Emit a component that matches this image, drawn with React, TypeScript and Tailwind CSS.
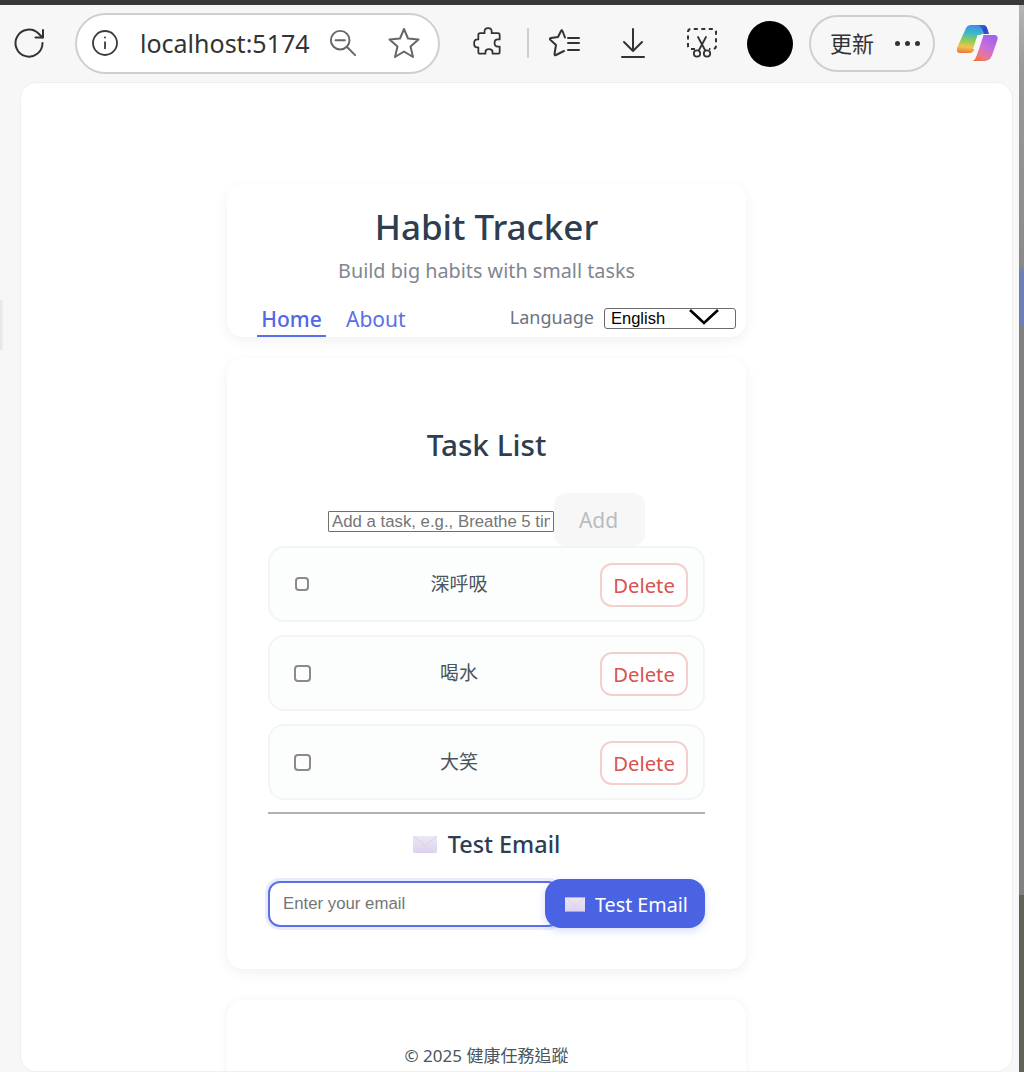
import React from "react";

const sans = "font-['Noto_Sans','Noto_Sans_CJK_TC',sans-serif]";

function Stroke({ size = 36, children, className = "" }: { size?: number; children: React.ReactNode; className?: string }) {
  return (
    <svg width={size} height={size} viewBox="0 0 36 36" fill="none" stroke="currentColor" strokeWidth="2" strokeLinecap="round" strokeLinejoin="round" className={className}>
      {children}
    </svg>
  );
}

function Icon32({ children }: { children: React.ReactNode }) {
  return (
    <svg width="32" height="32" viewBox="0 0 32 32" fill="none" stroke="currentColor" strokeWidth="2" strokeLinecap="round" strokeLinejoin="round">
      {children}
    </svg>
  );
}

function Mail({ w = 24, h = 17 }: { w?: number; h?: number }) {
  return (
    <svg width={w} height={h} viewBox="0 0 24 17" className="shrink-0">
      <defs>
        <linearGradient id="mailg" x1="0" y1="0" x2="0" y2="1">
          <stop offset="0" stopColor="#ece8f2" />
          <stop offset="1" stopColor="#ddd0f0" />
        </linearGradient>
      </defs>
      <rect width="24" height="17" fill="url(#mailg)" />
      <path d="M0 0 L12 9.5 L24 0" fill="none" stroke="#d9d2e4" strokeWidth="1" />
      <path d="M0 17 L9 7 M24 17 L15 7" fill="none" stroke="#e6e0ee" strokeWidth="1" />
    </svg>
  );
}

function Copilot() {
  return (
    <svg width="44" height="42" viewBox="0 0 44 42">
      <defs>
        <linearGradient id="cpl" x1="0.5" y1="0" x2="0.4" y2="1">
          <stop offset="0" stopColor="#3b8fe8" />
          <stop offset="0.3" stopColor="#3fb8c8" />
          <stop offset="0.55" stopColor="#8ccb5c" />
          <stop offset="0.8" stopColor="#efc64a" />
          <stop offset="1" stopColor="#ee7a3f" />
        </linearGradient>
        <linearGradient id="cpr" x1="0.85" y1="0" x2="0.25" y2="1">
          <stop offset="0" stopColor="#9a62ea" />
          <stop offset="0.5" stopColor="#cc6ed8" />
          <stop offset="0.8" stopColor="#ea7a8a" />
          <stop offset="1" stopColor="#ee7440" />
        </linearGradient>
        <linearGradient id="cpt" x1="0" y1="0" x2="1" y2="1">
          <stop offset="0" stopColor="#3a7ee6" />
          <stop offset="0.6" stopColor="#2746c8" />
          <stop offset="1" stopColor="#5a48d8" />
        </linearGradient>
      </defs>
      <path d="M10 5 Q11.5 2 15 2 H27 Q30 2 31 5 L33 11 H26 Q24 11 23 14 L18 27 Q17 30 13 30 H4 Q0 30 1 25 Z" fill="url(#cpl)" />
      <path d="M20 2 H27 Q30 2 31 5 L33 11 H28 Q27 6 24 4 Q22 2.5 20 2 Z" fill="url(#cpt)" />
      <path d="M24 12 H38 Q42.5 12 41.5 16.5 L36.5 31 C35 36 32 38 28 38 H15 C18 38 19.5 36 20.5 33 L23 26 Z" fill="url(#cpr)" />
      <path d="M21.5 12 H27.5 L23 26 H17 Z" fill="#fbf8fb" />
    </svg>
  );
}

function TaskRow({ name, box }: { name: string; box: string }) {
  return (
    <li className="flex h-[76px] items-center rounded-2xl border-2 border-[#f2f4f5] bg-[#fcfefd] pr-[15px]">
      <div className="flex w-[64px] shrink-0 justify-center">
        <span className={`block rounded-[4px] border-2 border-[#8a8a8a] bg-[#fdfdfd] ${box}`} />
      </div>
      <span className="flex-1 pr-[16px] text-center text-[19px] text-[#4a5560]">{name}</span>
      <button className="mt-[2px] h-[44px] w-[88px] rounded-xl border-2 border-[#f3cfcd] bg-white text-[20.3px] text-[#d9534f]">Delete</button>
    </li>
  );
}

export default function App() {
  return (
    <div className={`relative h-[1072px] w-[1024px] overflow-hidden bg-[#f7f7f7] ${sans}`}>
      <div className="h-[5px] bg-[#383838]" />
      <div className="flex h-[77px] items-center pb-[1px] pr-[5px] text-[#333]">
        <div className="ml-[12px] flex w-[36px] justify-center">
          <Stroke size={36}>
            <path d="M30.5 18 A13.5 13.5 0 1 1 26.5 8.5 L30.5 12.5" />
            <path d="M31 5 V12.5 H23.5" />
          </Stroke>
        </div>
        <div className="ml-[27px] flex h-[61px] w-[365px] items-center rounded-full border-2 border-[#cfcfcf] bg-white">
          <svg width="28" height="28" viewBox="0 0 28 28" fill="none" stroke="#3c3c3c" strokeWidth="1.8" className="ml-[14px]">
            <circle cx="14" cy="14" r="12" />
            <path d="M14 12.5 V20" />
            <circle cx="14" cy="8.5" r="1" fill="#3c3c3c" stroke="none" />
          </svg>
          <span className="ml-[21px] text-[25px] leading-none text-[#333]">localhost:5174</span>
          <svg width="28" height="28" viewBox="0 0 30 30" fill="none" stroke="#666" strokeWidth="2.1" strokeLinecap="round" className="ml-[19px]">
            <circle cx="12" cy="12" r="10" />
            <path d="M7 12 H17 M19 19 L28 28" />
          </svg>
          <svg width="32" height="32" viewBox="0 0 32 32" fill="none" stroke="#666" strokeWidth="2" strokeLinejoin="round" className="ml-[31px]">
            <path d="M16 2 L20 11.5 L30.5 12.5 L22.5 19.5 L25 30 L16 24.5 L7 30 L9.5 19.5 L1.5 12.5 L12 11.5 Z" />
          </svg>
        </div>
        <div className="ml-[33px]">
          <Stroke size={32}>
            <path d="M13 5 C13 0 21 0 21 5 V7 H28 A2 2 0 0 1 30 9 V14 H28 C23 14 23 22 28 22 H30 V28 A2 2 0 0 1 28 30 H22 V28 C22 24 14 24 14 28 V30 H8 A2 2 0 0 1 6 28 V23 H5 C0 23 0 14 5 14 H6 V9 A2 2 0 0 1 8 7 H13 Z" />
          </Stroke>
        </div>
        <div className="ml-[22px] h-[30px] w-[2px] bg-[#d0d0d0]" />
        <div className="ml-[19px]">
          <Icon32>
            <path d="M17 10.5 L14.5 4 Q14 2.5 13 4 L10 10 L3 11 Q1 11.5 2.5 13 L8 18 L6.5 27 Q6.5 29 8 28 L16 24" />
            <path d="M20 11 H31 M20 16 H31 M20 23 H31" />
          </Icon32>
        </div>
        <div className="ml-[37px]">
          <Icon32>
            <path d="M16 2 V24 M7 15 L16 24 L25 15 M5 30 H27" />
          </Icon32>
        </div>
        <div className="ml-[37px]">
          <Icon32>
            <path d="M9 22 H5 A3 3 0 0 1 2 19 V5 A3 3 0 0 1 5 2 H27 A3 3 0 0 1 30 5 V19 A3 3 0 0 1 27 22 H23" strokeDasharray="4 3.5" strokeLinecap="butt" />
            <path d="M12 10 L19 23 M20 10 L13 23" strokeWidth="1.8" />
            <circle cx="11" cy="26.5" r="3.2" strokeWidth="1.8" />
            <circle cx="21" cy="26.5" r="3.2" strokeWidth="1.8" />
          </Icon32>
        </div>
        <div className="ml-[29px] mt-[2px] h-[46px] w-[46px] rounded-full bg-black" />
        <div className="ml-[16px] flex h-[57px] w-[126px] items-center rounded-full border-2 border-[#cfcfcf] pl-[19px]">
          <span className="text-[22px] leading-none text-[#333]">更新</span>
          <span className="ml-[21px] flex gap-[5px]">
            <i className="block h-[5px] w-[5px] rounded-full bg-[#333]" />
            <i className="block h-[5px] w-[5px] rounded-full bg-[#333]" />
            <i className="block h-[5px] w-[5px] rounded-full bg-[#333]" />
          </span>
        </div>
        <div className="ml-[21px] mt-[1px]">
          <Copilot />
        </div>
      </div>

      <div className="ml-[20px] h-[990px] w-[993px] overflow-hidden rounded-[16px] border border-[#efefef] bg-white pt-[101px]">
        <div className="ml-[206px] flex w-[519px] flex-col">
          <header className="flex h-[153px] flex-col rounded-2xl bg-white shadow-[0_4px_14px_rgba(0,0,0,0.06)]">
            <h1 className="mt-[19px] text-center text-[35px] font-medium leading-[48px] text-[#2c3e50]">Habit Tracker</h1>
            <p className="mt-[7px] text-center text-[19.8px] leading-[26px] text-[#7f8790]">Build big habits with small tasks</p>
            <nav className="mt-[auto] flex h-[39px] items-start">
              <a className="ml-[30px] flex h-[39px] w-[69px] justify-center border-b-2 border-[#5a6fe8] pt-[7px] text-[21px] font-medium leading-[28px] text-[#5068e4]">Home</a>
              <a className="ml-[20px] pt-[7px] text-[21px] leading-[28px] text-[#5a70e4]">About</a>
              <div className="ml-auto mr-[10px] flex items-center pt-[5px]">
                <label className="pt-[1px] text-[18px] leading-[26px] text-[#6b7480]">Language</label>
                <div className="relative ml-[10px] h-[21px] w-[132px]">
                  <select className="h-full w-full appearance-none rounded-[3px] border border-[#6b6b6b] bg-white pl-[6px] font-['Liberation_Sans',sans-serif] text-[16.5px] leading-none text-black">
                    <option>English</option>
                  </select>
                  <svg width="30" height="16" viewBox="0 0 30 16" fill="none" stroke="#000" strokeWidth="2.6" className="pointer-events-none absolute left-[85px] top-[3px]">
                    <path d="M1 1 L15 14 L29 1" />
                  </svg>
                </div>
              </div>
            </nav>
          </header>

          <main className="mt-[21px] h-[611px] rounded-2xl bg-white px-[41px] shadow-[0_4px_14px_rgba(0,0,0,0.06)]">
            <h2 className="pt-[65px] text-center text-[29.7px] font-medium leading-[44px] text-[#2c3e50]">Task List</h2>
            <div className="mt-[27px] flex h-[52px] items-end justify-center">
              <div className="mb-[14px] flex items-center">
                <input readOnly placeholder="Add a task, e.g., Breathe 5 times" className="h-[21px] w-[226px] rounded-[1px] border-[1.5px] border-[#6f6f6f] px-[3px] font-['Liberation_Sans',sans-serif] text-[16.8px] placeholder:text-[#757575]" />
              </div>
              <button className="h-[53px] w-[91px] shrink-0 rounded-xl bg-[#f7f7f8] pr-[2px] pt-[2px] text-[21px] text-[#b9bcbf]">Add</button>
            </div>
            <ul className="flex flex-col gap-[13px]">
              <TaskRow name="深呼吸" box="h-[14px] w-[14px]" />
              <TaskRow name="喝水" box="h-[17px] w-[17px]" />
              <TaskRow name="大笑" box="h-[17px] w-[17px]" />
            </ul>
            <hr className="mt-[12px] border-t-2 border-[#b0b0b0]" />
            <h3 className="mt-[11px] flex items-center justify-center gap-[11px] text-[23.4px] font-medium leading-[38px] text-[#2c3e50]">
              <Mail />
              Test Email
            </h3>
            <div className="mt-[16px] flex items-center">
              <input readOnly placeholder="Enter your email" className="h-[46px] w-[292px] shrink-0 rounded-xl border-2 border-[#5a6fe8] bg-white pl-[13px] font-['Liberation_Sans',sans-serif] text-[16.8px] shadow-[0_0_0_3px_rgba(80,104,228,0.13)] outline-none placeholder:text-[#757575]" />
              <button className="relative -ml-[15px] flex h-[49px] w-[160px] shrink-0 items-center justify-center gap-[10px] rounded-2xl bg-[#4a63e2] pl-[3px] pt-[2px] text-[19.7px] text-white shadow-[0_3px_8px_rgba(74,99,226,0.22)]">
                <Mail w={20} h={15} />
                Test Email
              </button>
            </div>
          </main>

          <footer className="mt-[31px] h-[120px] rounded-2xl bg-white pt-[43px] text-center text-[17px] leading-[26px] text-[#4a5560] shadow-[0_0_10px_rgba(0,0,0,0.05)]">
            © 2025 健康任務追蹤
          </footer>
        </div>
      </div>

      <div className="absolute left-0 top-[300px] h-[50px] w-[4px] bg-[linear-gradient(to_right,#e4e4e4,#f7f7f7)]" />
      <div className="absolute right-0 top-[5px] h-[1067px] w-[5px] bg-[linear-gradient(to_bottom,#b5b5b5_0,#9a9a9a_60px,#8a8a8a_260px,#6c7fb8_268px,#6c7fb8_320px,#808080_320px,#808080_890px,#5e6258_890px)]" />
    </div>
  );
}
